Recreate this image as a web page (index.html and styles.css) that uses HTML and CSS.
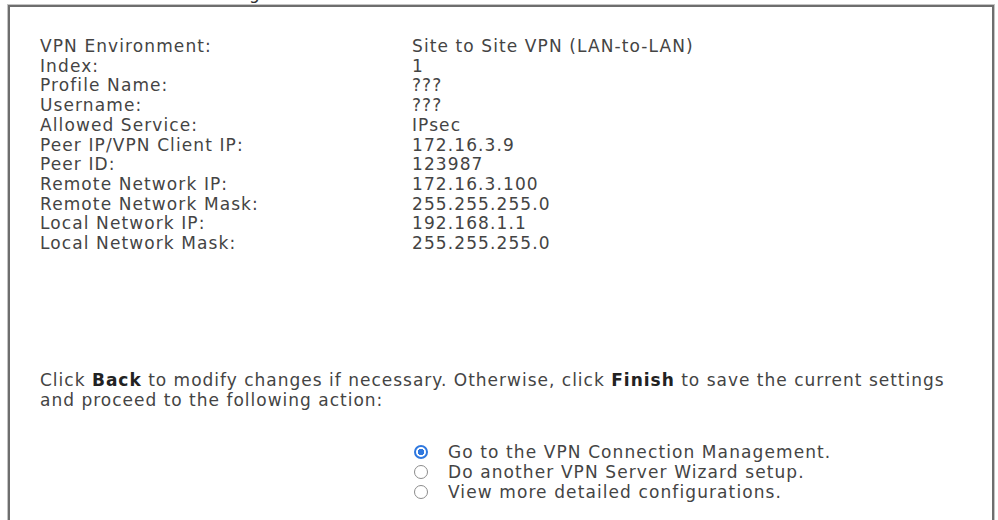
FILE: index.html
```html
<!DOCTYPE html>
<html>
<head>
<meta charset="utf-8">
<link rel="stylesheet" href="styles.css">
</head>
<body>
<div class="page">
  <div class="title">VPN Server Wizard Setting</div>
  <div class="box">
    <div class="summary">
      <div class="row"><span class="label">VPN Environment:</span><span class="value">Site to Site VPN (LAN-to-LAN)</span></div>
      <div class="row"><span class="label">Index:</span><span class="value">1</span></div>
      <div class="row"><span class="label">Profile Name:</span><span class="value">???</span></div>
      <div class="row"><span class="label">Username:</span><span class="value">???</span></div>
      <div class="row"><span class="label">Allowed Service:</span><span class="value">IPsec</span></div>
      <div class="row"><span class="label">Peer IP/VPN Client IP:</span><span class="value">172.16.3.9</span></div>
      <div class="row"><span class="label">Peer ID:</span><span class="value">123987</span></div>
      <div class="row"><span class="label">Remote Network IP:</span><span class="value">172.16.3.100</span></div>
      <div class="row"><span class="label">Remote Network Mask:</span><span class="value">255.255.255.0</span></div>
      <div class="row"><span class="label">Local Network IP:</span><span class="value">192.168.1.1</span></div>
      <div class="row"><span class="label">Local Network Mask:</span><span class="value">255.255.255.0</span></div>
    </div>
    <p class="note">Click <b>Back</b> to modify changes if necessary. Otherwise, click <b>Finish</b> to save the current settings and proceed to the following action:</p>
    <div class="options">
      <label class="opt"><span class="radio checked"></span>Go to the VPN Connection Management.</label>
      <label class="opt"><span class="radio"></span>Do another VPN Server Wizard setup.</label>
      <label class="opt"><span class="radio"></span>View more detailed configurations.</label>
    </div>
  </div>
</div>
</body>
</html>
```
FILE: styles.css
```css
html, body {
  margin: 0;
  padding: 0;
  background: #ffffff;
}
body {
  font-family: "DejaVu Sans", Verdana, sans-serif;
  font-size: 17px;
  letter-spacing: 1.1px;
  color: #444444;
  overflow: hidden;
}
.page {
  padding: 0 4px 0 8px;
}
.title {
  height: 20px;
  line-height: 20px;
  margin: -17px 0 2px 0;
  color: #333333;
  white-space: nowrap;
}
.box {
  border: 2px solid #6e6e6e;
  box-shadow: 0 0 0 1px #c4c4c4;
  padding: 30px 18px 40px 30px;
  height: 600px;
}
.row {
  display: grid;
  grid-template-columns: 372px 1fr;
  line-height: 19.7px;
}
.note {
  margin: 116px 0 0;
  line-height: 20px;
  letter-spacing: 1px;
}
.note b {
  color: #222222;
}
.options {
  margin-top: 32px;
  padding-left: 374px;
  display: flex;
  flex-direction: column;
}
.opt {
  display: flex;
  align-items: center;
  line-height: 20px;
}
.radio {
  width: 14px;
  height: 14px;
  border: 1.5px solid #8c8c8c;
  border-radius: 50%;
  margin: 0 20px 0 0;
  box-sizing: border-box;
  flex: none;
  background: #ffffff;
}
.radio.checked {
  border: 2px solid #2f78df;
  background: radial-gradient(circle, #2f78df 0 3px, #ffffff 3.5px);
}
```
